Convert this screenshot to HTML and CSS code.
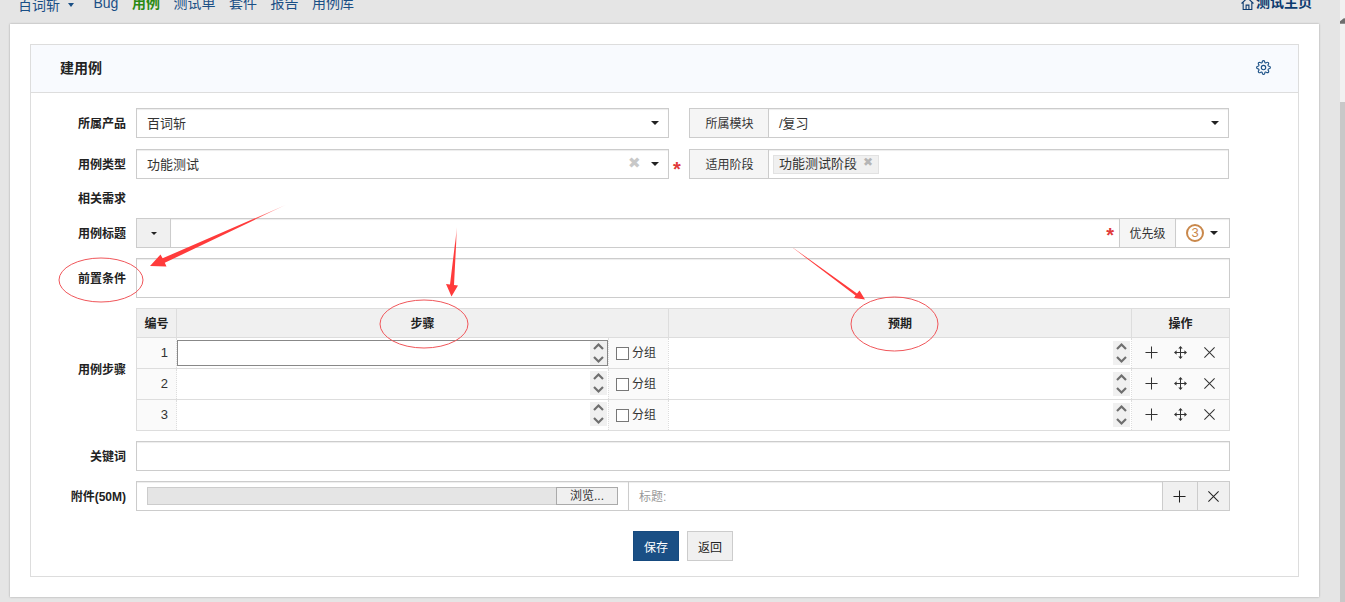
FILE: index.html
```html
<!DOCTYPE html>
<html lang="zh-CN">
<head>
<meta charset="utf-8">
<title>建用例</title>
<link rel="stylesheet" href="styles.css">
</head>
<body>
<svg class="defs" width="0" height="0" aria-hidden="true">
  <symbol id="i-plus" viewBox="0 0 14 14"><path d="M7 .5v13M.5 7h13" fill="none" stroke="currentColor" stroke-width="1.1"/></symbol>
  <symbol id="i-x" viewBox="0 0 14 14"><path d="M1.5 1.5l11 11M12.5 1.5l-11 11" fill="none" stroke="currentColor" stroke-width="1.1"/></symbol>
  <symbol id="i-move" viewBox="0 0 14 14"><path d="M7 1v12M1 7h12" fill="none" stroke="currentColor" stroke-width="1.1"/><path d="M7 0l2.4 2.8H4.6zM7 14l2.4-2.8H4.6zM0 7l2.8-2.4v4.8zM14 7l-2.8-2.4v4.8z" fill="currentColor"/></symbol>
  <symbol id="i-spin" viewBox="0 0 17 24"><path d="M4 8l4.500-4.500L13 8M4 16l4.500 4.500L13 16" fill="none" stroke="#6f6f6f" stroke-width="2.200"/></symbol>
</svg>

<div class="app">
  <div class="page">
    <nav class="nav">
      <div class="nav-left">
        <a class="nav-product">百词斩<i class="caret caret-nav"></i></a>
        <a class="nav-link">Bug</a>
        <a class="nav-link nav-active">用例</a>
        <a class="nav-link">测试单</a>
        <a class="nav-link">套件</a>
        <a class="nav-link">报告</a>
        <a class="nav-link">用例库</a>
      </div>
      <a class="nav-home">
        <svg class="home-icon" viewBox="0 0 12 12"><path d="M.5 6L6 .8 11.500 6M2 5v6.500h8V5M4.700 11.500V7.500h2.600v4" fill="none" stroke="currentColor" stroke-width="1"/></svg>测试主页
      </a>
    </nav>

    <main class="card">
      <section class="panel">
        <header class="panel-head">
          <strong class="panel-title">建用例</strong>
          <svg class="gear" viewBox="0 0 24 24"><circle cx="12" cy="12" r="3.500" fill="none" stroke="currentColor" stroke-width="1.800"/><path fill="none" stroke="currentColor" stroke-width="1.800" d="M19.400 15a1.650 1.650 0 0 0 .33 1.820l.06.06a2 2 0 0 1 0 2.830 2 2 0 0 1-2.830 0l-.06-.06a1.650 1.650 0 0 0-1.820-.33 1.650 1.650 0 0 0-1 1.510V21a2 2 0 0 1-2 2 2 2 0 0 1-2-2v-.09A1.650 1.650 0 0 0 9 19.400a1.650 1.650 0 0 0-1.820.33l-.06.06a2 2 0 0 1-2.830 0 2 2 0 0 1 0-2.830l.06-.06a1.650 1.650 0 0 0 .33-1.820 1.650 1.650 0 0 0-1.510-1H3a2 2 0 0 1-2-2 2 2 0 0 1 2-2h.09A1.650 1.650 0 0 0 4.600 9a1.650 1.650 0 0 0-.33-1.820l-.06-.06a2 2 0 0 1 0-2.830 2 2 0 0 1 2.830 0l.06.06a1.650 1.650 0 0 0 1.820.33H9a1.650 1.650 0 0 0 1-1.510V3a2 2 0 0 1 2-2 2 2 0 0 1 2 2v.09a1.650 1.650 0 0 0 1 1.510 1.650 1.650 0 0 0 1.820-.33l.06-.06a2 2 0 0 1 2.830 0 2 2 0 0 1 0 2.830l-.06.06a1.650 1.650 0 0 0-.33 1.820V9a1.650 1.650 0 0 0 1.510 1H21a2 2 0 0 1 2 2 2 2 0 0 1-2 2h-.09a1.650 1.650 0 0 0-1.510 1z"/></svg>
        </header>

        <form class="form">
          <div class="row row-first">
            <label class="label">所属产品</label>
            <div class="split">
              <div class="select"><span class="grow">百词斩</span><i class="caret"></i></div>
              <span></span>
              <div class="group">
                <span class="addon addon-module">所属模块</span>
                <div class="select select-joined"><span class="grow">/复习</span><i class="caret"></i></div>
              </div>
            </div>
          </div>

          <div class="row">
            <label class="label">用例类型</label>
            <div class="split">
              <div class="select"><span class="grow">功能测试</span><span class="clear">✖</span><i class="caret"></i></div>
              <span class="star star-side">*</span>
              <div class="group">
                <span class="addon addon-module">适用阶段</span>
                <div class="select select-joined select-tags"><span class="tag">功能测试阶段<span class="tag-x">✖</span></span></div>
              </div>
            </div>
          </div>

          <div class="row row-short">
            <label class="label">相关需求</label>
          </div>

          <div class="row">
            <label class="label">用例标题</label>
            <div class="group group-full">
              <span class="addon addon-drop"><i class="caret caret-small"></i></span>
              <div class="select select-joined title-box"><span class="grow"></span><span class="star">*</span></div>
              <span class="addon addon-pri">优先级</span>
              <div class="select select-joined pri-box"><span class="pri">3</span><i class="caret"></i></div>
            </div>
          </div>

          <div class="row row-tall">
            <label class="label">前置条件</label>
            <textarea class="input input-area"></textarea>
          </div>

          <div class="row row-table">
            <label class="label">用例步骤</label>
            <table class="steps">
              <colgroup><col class="col-no"><col class="col-step"><col class="col-exp"><col class="col-act"></colgroup>
              <thead>
                <tr><th>编号</th><th>步骤</th><th>预期</th><th>操作</th></tr>
              </thead>
              <tbody>
                <tr>
                  <td class="num">1</td>
                  <td>
                    <div class="step-cell">
                      <div class="step-input step-focus"><svg class="spin"><use href="#i-spin"/></svg></div>
                      <div class="group-check"><span class="box"></span>分组</div>
                    </div>
                  </td>
                  <td><div class="step-input exp-input"><svg class="spin"><use href="#i-spin"/></svg></div></td>
                  <td class="actions"><div class="act-row"><svg class="act"><use href="#i-plus"/></svg><svg class="act"><use href="#i-move"/></svg><svg class="act"><use href="#i-x"/></svg></div></td>
                </tr>
                <tr>
                  <td class="num">2</td>
                  <td>
                    <div class="step-cell">
                      <div class="step-input"><svg class="spin"><use href="#i-spin"/></svg></div>
                      <div class="group-check"><span class="box"></span>分组</div>
                    </div>
                  </td>
                  <td><div class="step-input exp-input"><svg class="spin"><use href="#i-spin"/></svg></div></td>
                  <td class="actions"><div class="act-row"><svg class="act"><use href="#i-plus"/></svg><svg class="act"><use href="#i-move"/></svg><svg class="act"><use href="#i-x"/></svg></div></td>
                </tr>
                <tr>
                  <td class="num">3</td>
                  <td>
                    <div class="step-cell">
                      <div class="step-input"><svg class="spin"><use href="#i-spin"/></svg></div>
                      <div class="group-check"><span class="box"></span>分组</div>
                    </div>
                  </td>
                  <td><div class="step-input exp-input"><svg class="spin"><use href="#i-spin"/></svg></div></td>
                  <td class="actions"><div class="act-row"><svg class="act"><use href="#i-plus"/></svg><svg class="act"><use href="#i-move"/></svg><svg class="act"><use href="#i-x"/></svg></div></td>
                </tr>
              </tbody>
            </table>
          </div>

          <div class="row">
            <label class="label">关键词</label>
            <input class="input" type="text">
          </div>

          <div class="row">
            <label class="label">附件(50M)</label>
            <div class="group group-full">
              <div class="file-cell">
                <div class="file-bar"><span class="file-btn">浏览...</span></div>
              </div>
              <div class="select select-joined file-title"><span class="muted">标题:</span></div>
              <span class="addon addon-icon addon-plus"><svg class="act-file"><use href="#i-plus"/></svg></span>
              <span class="addon addon-icon addon-close"><svg class="act-file"><use href="#i-x"/></svg></span>
            </div>
          </div>

          <div class="row-actions">
            <button class="btn btn-primary" type="button">保存</button>
            <button class="btn" type="button">返回</button>
          </div>
        </form>
      </section>
    </main>
  </div>

  <aside class="scrollbar">
    <svg class="scroll-arrow" viewBox="0 0 6 8"><path d="M0 8V5l5-4 1 1v6z" fill="#6e6e6e"/></svg>
    <div class="scroll-thumb"></div>
  </aside>
</div>

<svg class="notes" viewBox="0 0 1345 602" aria-hidden="true">
  <defs>
    <linearGradient id="fade1" gradientUnits="userSpaceOnUse" x1="285" y1="205" x2="250" y2="221"><stop offset="0" stop-color="#ff3b3b" stop-opacity=".35"/><stop offset="1" stop-color="#ff3b3b"/></linearGradient>
    <linearGradient id="fade2" gradientUnits="userSpaceOnUse" x1="457" y1="227" x2="456" y2="245"><stop offset="0" stop-color="#ff3b3b" stop-opacity=".35"/><stop offset="1" stop-color="#ff3b3b"/></linearGradient>
    <linearGradient id="fade3" gradientUnits="userSpaceOnUse" x1="793" y1="248" x2="805" y2="257"><stop offset="0" stop-color="#ff3b3b" stop-opacity=".6"/><stop offset="1" stop-color="#ff3b3b"/></linearGradient>
  </defs>
  <polygon points="285.500,205 164.800,262.800 166.500,266.500 150,266 160.500,254.500 162.600,258.300" fill="url(#fade1)"/>
  <polygon points="457,227 454,285 458,285.500 451.500,296.500 446,284 450,284.500" fill="url(#fade2)"/>
  <polygon points="793,248 793.500,248 857,293.500 859.500,290.500 865,299.500 854,298 855.500,295.500" fill="url(#fade3)"/>
  <ellipse cx="101" cy="280" rx="42" ry="22" fill="none" stroke="#f0565a"/>
  <ellipse cx="424" cy="324" rx="44" ry="24" fill="none" stroke="#f0565a"/>
  <ellipse cx="894.500" cy="324" rx="43.500" ry="27" fill="none" stroke="#f0565a"/>
</svg>
</body>
</html>
```

FILE: styles.css
```css
* { box-sizing: border-box; }
html, body { margin: 0; height: 602px; overflow: hidden; }
body {
  position: relative;
  background: #e5e5e5;
  color: #333;
  font: 13px/1.4 "Liberation Sans", "Noto Sans CJK SC", sans-serif;
}
.defs { position: absolute; }
.app { display: flex; height: 602px; }
.page { width: 1340px; flex: none; padding-right: 21px; padding-left: 10px; }

/* nav, its top is scrolled out of the window */
.nav {
  height: 24px;
  margin-left: 8px;
  overflow: hidden;
  display: flex;
  justify-content: space-between;
  color: #0b3a6e;
  font-size: 14px;
}
.nav-left { display: flex; gap: 13.500px; margin-top: -9px; line-height: 24px; }
.nav-product { display: flex; align-items: center; margin-right: 6px; color: #1a4f85; padding-top: 4px; height: 24px; }
.nav-link { color: #1a4f85; }
.nav-active { color: #2a8a12; font-weight: 700; }
.nav-home { display: flex; align-items: center; height: 24px; margin-top: -9px; font-weight: 700; color: #0b3a6e; margin-right: 7px; }
.home-icon { width: 13px; height: 13px; margin-right: 2px; }
.caret {
  display: block;
  flex: none;
  width: 0; height: 0;
  border-left: 4px solid transparent;
  border-right: 4px solid transparent;
  border-top: 4px solid #222;
}
.caret-nav { margin-left: 8px; border-left-width: 3.500px; border-right-width: 3.500px; border-top-color: #1a4f85; }
.caret-small { border-left-width: 3px; border-right-width: 3px; border-top-width: 3px; }

/* card */
.card {
  height: 573px;
  padding: 20px;
  background: #fff;
  box-shadow: 0 0 2px rgba(0, 0, 0, .3);
}
.panel { height: 533px; border: 1px solid #ddd; }
.panel-head {
  height: 48px;
  padding: 0 27px 0 29px;
  display: flex;
  align-items: center;
  justify-content: space-between;
  background: #f8fafe;
  border-bottom: 1px solid #ddd;
}
.panel-title { font-size: 14px; color: #222; }
.gear { width: 15px; height: 15px; color: #1a4f85; margin-top: -3px; }

/* form */
.form { padding: 15px 0 15px; display: flex; flex-direction: column; gap: 10px; }
.row { display: flex; gap: 10px; align-items: center; height: 30px; }
.row-first { height: 30px; margin-bottom: 1px; }
.row-short { height: 19px; }
.row-tall { height: 40px; }
.row-table { height: 123px; align-items: flex-start; }
.row-table .label { align-self: center; }
.label { width: 95px; flex: none; padding-top: 2px; text-align: right; font-size: 12px; font-weight: 700; color: #222; }
.split { display: grid; grid-template-columns: 533px 20px 540px; width: 1094px; height: 30px; }
.select, .input {
  display: flex;
  align-items: center;
  height: 30px;
  border: 1px solid #ccc;
  background: #fff;
  box-shadow: inset 0 1px 1px rgba(0, 0, 0, .075);
  padding: 0 9px 0 10px;
  color: #333;
  font: inherit;
}
.input { width: 1094px; flex: none; outline: none; resize: none; }
.input-area { height: 40px; }
.grow { flex: 1; padding-top: 2px; }
.clear { color: #c8c8c8; font-size: 15px; margin: -3px 10px 0 0; line-height: 1; }
.star { color: #e03a3a; font-size: 20px; font-weight: 700; line-height: 1; height: 11px; margin-top: -5px; }
.star-side { margin: 10px 0 0 4px; }
.group { display: flex; height: 30px; }
.group-full { width: 1094px; }
.addon {
  display: flex;
  align-items: center;
  justify-content: center;
  flex: none;
  height: 30px;
  border: 1px solid #ccc;
  background: #f5f5f5;
  font-size: 12px;
}
.addon-module { width: 80px; padding: 2px 0 0 1px; }
.select-joined { flex: 1; border-left: 0; min-width: 0; }
.select-tags { padding-left: 4px; }
.tag {
  display: flex;
  align-items: center;
  height: 19px;
  padding: 1px 5px 0 5px;
  background: #f0f0f0;
  border: 1px solid #e2e2e2;
  white-space: nowrap;
}
.tag-x { color: #b5b5b5; font-size: 12px; margin: -4px 0 0 6px; }
.addon-drop { width: 35px; background: #f0f0f0; }
.title-box { padding-right: 5px; }
.addon-pri { width: 56px; border-left: 0; padding-top: 2px; }
.pri-box { flex: none; width: 54px; padding: 0 11px 0 10px; justify-content: space-between; }
.pri {
  width: 18px; height: 18px;
  border: 2px solid #c9884b;
  border-radius: 50%;
  color: #c9884b;
  font-size: 13px;
  line-height: 14px;
  text-align: center;
}

/* steps table */
.steps {
  width: 1093px;
  height: 122px;
  flex: none;
  table-layout: fixed;
  border-collapse: collapse;
  font-size: 12px;
}
.col-no { width: 40px; }
.col-step { width: 492px; }
.col-exp { width: 463px; }
.col-act { width: 98px; }
.steps th, .steps td { padding: 0; border: 1px solid #ddd; }
.steps th { height: 29px; padding-top: 2px; background: #f0f0f0; font-weight: 700; color: #222; }
.steps td { height: 31px; border-left: 1px dotted #ddd; border-right: 1px dotted #ddd; }
.steps td:first-child { border-left: 1px solid #ddd; }
.steps td:last-child { border-right: 1px solid #ddd; }
.num { text-align: right; padding-right: 8px !important; font-size: 13px; background: #fafafa; }
.step-cell { display: flex; height: 30px; }
.step-input {
  position: relative;
  width: 431px;
  height: 26px;
  margin-top: 2px;
  flex: none;
  background: #fff;
}
.exp-input { width: 100%; }
.step-focus { border: 1px solid #888; }
.spin { position: absolute; right: 1px; top: 0; width: 17px; height: 24px; background: #f0f0f0; }
.step-focus .spin { right: 0; }
.group-check {
  flex: 1;
  display: flex;
  align-items: center;
  padding-left: 7px;
  background: #fafafa;
  border-left: 1px dotted #ddd;
  color: #333;
}
.box { width: 13px; height: 13px; margin-right: 3px; border: 1px solid #777; background: #fff; }
.actions { background: #fafafa; }
.act-row { display: flex; justify-content: center; gap: 16px; margin-top: -2px; color: #333; }
.act { width: 13px; height: 13px; }

/* file row */
.file-cell {
  width: 493px;
  flex: none;
  padding: 5px 10px;
  height: 30px;
  border: 1px solid #ccc;
  box-shadow: inset 0 1px 1px rgba(0, 0, 0, .075);
}
.file-bar {
  display: flex;
  justify-content: flex-end;
  height: 18px;
  background: #e5e5e5;
  border: 1px solid #ccc;
}
.file-btn {
  width: 62px;
  margin: -1px -1px -1px 0;
  text-align: center;
  font-size: 12px;
  line-height: 17px;
  color: #333;
  background: #f0f0f0;
  border: 1px solid #aaa;
}
.muted { color: #999; font-size: 12px; padding-top: 2px; }
.addon-icon { background: #f0f0f0; border-left: 0; color: #222; }
.addon-plus { width: 35px; padding-right: 1px; }
.addon-close { width: 32px; }
.act-file { width: 13px; height: 13px; }

/* buttons */
.row-actions { display: flex; justify-content: center; gap: 8px; margin: 10px 0 0 105px; width: 1094px; }
.btn {
  width: 46px;
  height: 30px;
  padding: 0;
  border: 1px solid #ccc;
  background: #f0f0f0;
  color: #222;
  font: 12px "Liberation Sans", "Noto Sans CJK SC", sans-serif;
}
.btn-primary { background: #1a4f85; border-color: #164a7f; color: #fff; }

/* scrollbar */
.scrollbar { flex: 1; position: relative; background: #f1f1f1; }
.scroll-arrow { position: absolute; left: 0; top: 17px; width: 5px; height: 7px; }
.scroll-thumb { position: absolute; left: 0; right: 0; top: 102px; bottom: 0; background: #c8c8c8; }

/* reviewer's marks on top of the screenshot */
.notes { position: absolute; left: 0; top: 0; width: 1345px; height: 602px; pointer-events: none; }
```
